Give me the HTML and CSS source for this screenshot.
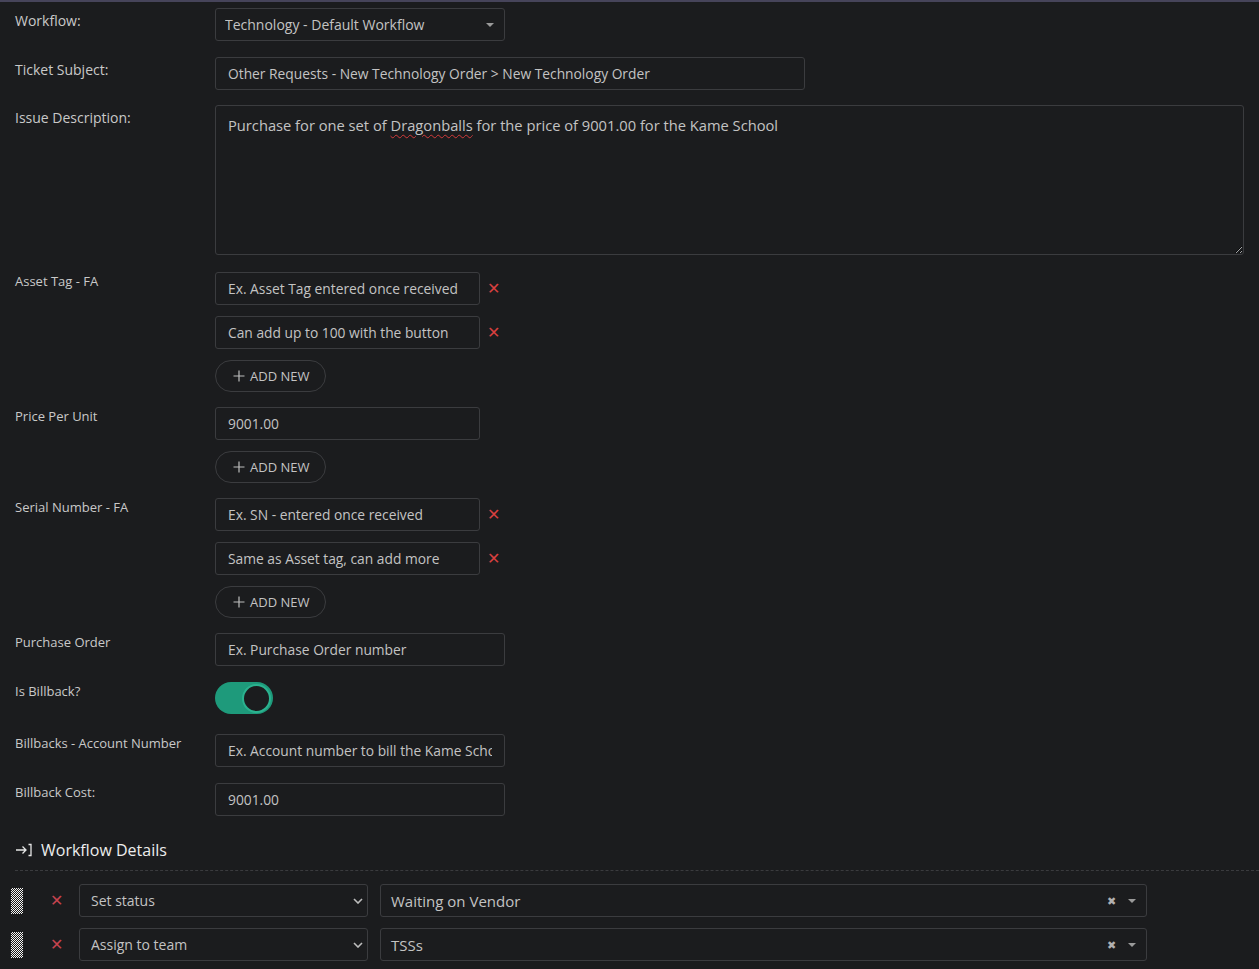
FILE: index.html
```html
<!DOCTYPE html>
<html lang="en">
<head>
  <meta charset="UTF-8" />
  <meta name="viewport" content="width=device-width, initial-scale=1.0"/>
  <title>New Ticket - Technology Order</title>
  <link rel="stylesheet" href="styles.css">
</head>
<body>
  <div class="ticket-form">
    <div class="form-row">
      <label class="label label-main">Workflow:</label>
      <div class="field">
        <div class="select-wrap w-sm">
          <select class="input select">
            <option>Technology - Default Workflow</option>
          </select>
          <svg class="caret" width="10" height="6" viewBox="0 0 10 6"><path d="M1 1h8L5 5z" fill="#9a9a9a"/></svg>
        </div>
      </div>
    </div>

    <div class="form-row row-subject">
      <label class="label label-main">Ticket Subject:</label>
      <div class="field">
        <input class="input w-md" type="text" value="Other Requests - New Technology Order &gt; New Technology Order">
      </div>
    </div>

    <div class="form-row row-desc">
      <label class="label label-main">Issue Description:</label>
      <div class="field">
        <div class="textarea">Purchase for one set of <span class="misspelled">Dragonballs</span> for the price of 9001.00 for the Kame School</div>
      </div>
    </div>

    <div class="form-row row-multi">
      <label class="label">Asset Tag - FA</label>
      <div class="field">
        <div class="multi-item">
          <input class="input w-xs" type="text" value="Ex. Asset Tag entered once received">
          <button class="remove">&#x2715;</button>
        </div>
        <div class="multi-item">
          <input class="input w-xs" type="text" value="Can add up to 100 with the button">
          <button class="remove">&#x2715;</button>
        </div>
        <button class="btn-add"><svg width="12" height="12" viewBox="0 0 12 12"><path d="M6 0.5v11M0.5 6h11" stroke="#bdbdbd" stroke-width="1.2"/></svg>ADD NEW</button>
      </div>
    </div>

    <div class="form-row row-multi">
      <label class="label">Price Per Unit</label>
      <div class="field">
        <div class="multi-item">
          <input class="input w-xs" type="text" value="9001.00">
        </div>
        <button class="btn-add"><svg width="12" height="12" viewBox="0 0 12 12"><path d="M6 0.5v11M0.5 6h11" stroke="#bdbdbd" stroke-width="1.2"/></svg>ADD NEW</button>
      </div>
    </div>

    <div class="form-row row-multi">
      <label class="label">Serial Number - FA</label>
      <div class="field">
        <div class="multi-item">
          <input class="input w-xs" type="text" value="Ex. SN - entered once received">
          <button class="remove">&#x2715;</button>
        </div>
        <div class="multi-item">
          <input class="input w-xs" type="text" value="Same as Asset tag, can add more">
          <button class="remove">&#x2715;</button>
        </div>
        <button class="btn-add"><svg width="12" height="12" viewBox="0 0 12 12"><path d="M6 0.5v11M0.5 6h11" stroke="#bdbdbd" stroke-width="1.2"/></svg>ADD NEW</button>
      </div>
    </div>

    <div class="form-row">
      <label class="label">Purchase Order</label>
      <div class="field">
        <input class="input w-sm" type="text" value="Ex. Purchase Order number">
      </div>
    </div>

    <div class="form-row row-toggle">
      <label class="label">Is Billback?</label>
      <div class="field">
        <span class="toggle on"><span class="knob"></span></span>
      </div>
    </div>

    <div class="form-row">
      <label class="label">Billbacks - Account Number</label>
      <div class="field">
        <input class="input w-sm" type="text" value="Ex. Account number to bill the Kame School">
      </div>
    </div>

    <div class="form-row">
      <label class="label">Billback Cost:</label>
      <div class="field">
        <input class="input w-sm" type="text" value="9001.00">
      </div>
    </div>

    <h3 class="section-title">
      <svg width="18" height="16" viewBox="0 0 18 16"><path d="M1 8h10M7.5 4.5L11 8l-3.5 3.5M13.5 2.5h2.5v11h-2.5" fill="none" stroke="#e6e6e6" stroke-width="1.3"/></svg>
      Workflow Details
    </h3>

    <div class="workflow-list">
      <div class="wf-row">
        <span class="drag"></span>
        <button class="remove remove-wf">&#x2715;</button>
        <div class="select-wrap wf-action">
          <select class="input select">
            <option>Set status</option>
          </select>
          <svg class="chevron" width="10" height="6" viewBox="0 0 10 6"><path d="M1 1l4 4 4-4" fill="none" stroke="#bdbdbd" stroke-width="1.6"/></svg>
        </div>
        <div class="select2">
          <span class="select2-value">Waiting on Vendor</span>
          <span class="select2-clear">&#x2716;</span>
          <svg width="10" height="6" viewBox="0 0 10 6"><path d="M1 1h8L5 5z" fill="#9a9a9a"/></svg>
        </div>
      </div>
      <div class="wf-row">
        <span class="drag"></span>
        <button class="remove remove-wf">&#x2715;</button>
        <div class="select-wrap wf-action">
          <select class="input select">
            <option>Assign to team</option>
          </select>
          <svg class="chevron" width="10" height="6" viewBox="0 0 10 6"><path d="M1 1l4 4 4-4" fill="none" stroke="#bdbdbd" stroke-width="1.6"/></svg>
        </div>
        <div class="select2">
          <span class="select2-value">TSSs</span>
          <span class="select2-clear">&#x2716;</span>
          <svg width="10" height="6" viewBox="0 0 10 6"><path d="M1 1h8L5 5z" fill="#9a9a9a"/></svg>
        </div>
      </div>
    </div>
  </div>
</body>
</html>
```

FILE: styles.css
```css
:root {
  --bg: #1b1c1e;
  --border: #3b3c3f;
  --text: #c3c3c3;
  --label: #c9c9c9;
  --danger: #d8403f;
  --toggle: #1e9a7b;
}

* {
  box-sizing: border-box;
}

html {
  color-scheme: dark;
}

body {
  margin: 0;
  font-family: "Open Sans", "Noto Sans", sans-serif;
  background: var(--bg);
  color: var(--text);
  border-top: 2px solid #46445a;
}

.ticket-form {
  padding: 6px 0 0 0;
}

.form-row {
  display: flex;
  padding-left: 15px;
  margin-bottom: 16px;
}

.row-subject {
  margin-bottom: 15px;
}

.row-desc {
  margin-bottom: 17px;
}

.row-multi {
  margin-bottom: 15px;
}

.row-toggle {
  margin-bottom: 20px;
}

.label {
  width: 200px;
  flex-shrink: 0;
  font-size: 13px;
  line-height: 18px;
  color: var(--label);
}

.label-main {
  font-size: 14px;
  padding-top: 4px;
}

.field {
  flex: 1;
  padding-right: 15px;
}

.input {
  height: 33px;
  background: var(--bg);
  border: 1px solid var(--border);
  border-radius: 3px;
  color: var(--text);
  font-family: inherit;
  font-size: 13.8px;
  padding: 0 12px;
  outline: none;
}

.w-xs { width: 265px; }
.w-sm { width: 290px; }
.w-md { width: 590px; }

.select-wrap {
  position: relative;
}

.select {
  appearance: none;
  width: 100%;
  padding: 0 30px 0 9px;
  font-size: 14px;
}

.select-wrap .caret {
  position: absolute;
  right: 10px;
  top: 14px;
}

.select-wrap .chevron {
  position: absolute;
  right: 5px;
  top: 14px;
}

.textarea {
  height: 150px;
  border: 1px solid var(--border);
  border-radius: 3px;
  padding: 9px 12px;
  font-size: 14.7px;
  line-height: 20px;
  overflow: auto;
  resize: both;
}

.misspelled {
  text-decoration: underline wavy #d23b3b;
  text-decoration-thickness: 1px;
  text-underline-offset: 3px;
}

.multi-item {
  display: flex;
  align-items: center;
}

.multi-item + .multi-item {
  margin-top: 11px;
}

.remove {
  background: none;
  border: none;
  color: var(--danger);
  font-size: 16px;
  padding: 0;
  margin-left: 7px;
  cursor: pointer;
}

.btn-add {
  display: flex;
  align-items: center;
  gap: 5px;
  height: 32px;
  width: 111px;
  margin-top: 11px;
  padding: 0 0 0 17px;
  background: none;
  border: 1px solid var(--border);
  border-radius: 16px;
  color: var(--text);
  font-family: inherit;
  font-size: 13px;
  cursor: pointer;
}

.toggle {
  display: flex;
  align-items: center;
  justify-content: flex-end;
  width: 58px;
  height: 32px;
  border-radius: 16px;
  background: var(--toggle);
  padding: 2px;
}

.knob {
  width: 29px;
  height: 29px;
  border-radius: 50%;
  background: var(--bg);
  border: 2px solid #2bb28f;
}

.section-title {
  display: flex;
  align-items: center;
  gap: 8px;
  margin: 23px 0 0 15px;
  padding-bottom: 9px;
  font-size: 16px;
  font-weight: normal;
  color: #ededed;
  border-bottom: 1px dashed #3a3b3e;
}

.workflow-list {
  padding-top: 13px;
}

.wf-row {
  display: flex;
  align-items: center;
  padding-left: 11px;
  margin-bottom: 11px;
}

.drag {
  width: 12px;
  height: 26px;
  background-color: #111;
  background-image: repeating-conic-gradient(#f2f2f2 0 25%, #1a1a1a 0 50%);
  background-size: 2px 2px;
}

.remove-wf {
  width: 56px;
  margin: 0;
  padding-left: 27px;
  text-align: left;
  color: #c6434e;
  font-size: 16px;
}

.wf-action {
  width: 289px;
}

.wf-action .select {
  padding-left: 11px;
  font-size: 14px;
}

.select2 {
  display: flex;
  align-items: center;
  width: 767px;
  height: 33px;
  margin-left: 12px;
  border: 1px solid var(--border);
  border-radius: 3px;
  padding: 0 9px 0 10px;
  font-size: 15px;
}

.select2-value {
  flex: 1;
}

.select2-clear {
  font-size: 11px;
  color: #b0b0b0;
  margin-right: 11px;
}
```
